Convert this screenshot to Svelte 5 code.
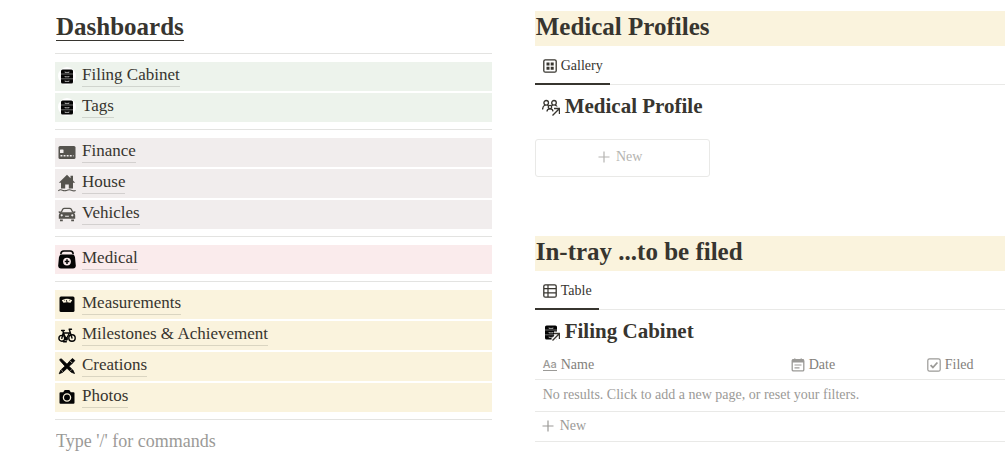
<script>
    const groups = [
        {
            color: 'green',
            items: [
                { name: 'Filing Cabinet', icon: 'cabinet' },
                { name: 'Tags', icon: 'cabinet' }
            ]
        },
        {
            color: 'brown',
            items: [
                { name: 'Finance', icon: 'card' },
                { name: 'House', icon: 'house' },
                { name: 'Vehicles', icon: 'car' }
            ]
        },
        {
            color: 'pink',
            items: [{ name: 'Medical', icon: 'medical' }]
        },
        {
            color: 'yellow',
            items: [
                { name: 'Measurements', icon: 'scale' },
                { name: 'Milestones & Achievement', icon: 'bike' },
                { name: 'Creations', icon: 'tools' },
                { name: 'Photos', icon: 'camera' }
            ]
        }
    ];

    let command = $state('');
</script>

{#snippet cabinet()}
    <rect x="3" y="2.5" width="12" height="14" rx="1.6" fill="#050505" />
    <path d="M3 7h12M3 11.8h12" stroke="#999" stroke-width=".7" />
    <path d="M7 4.6v.8h4v-.8M7 9v.8h4V9M7 13.6v.8h4v-.8" fill="none" stroke="#ccc" stroke-width=".8" />
{/snippet}

{#snippet plus()}
    <svg class="plus" viewBox="0 0 12 12" aria-hidden="true">
        <path d="M6 .5v11M.5 6h11" fill="none" stroke="currentColor" stroke-width="1.2" />
    </svg>
{/snippet}

{#snippet arrow()}
    <path d="M10.5 17.5l7-7M12 10.5h5.500v5.500" fill="none" stroke="#fff" stroke-width="4" />
    <path d="M10.5 17.5l7-7M12 10.5h5.500v5.500" fill="none" stroke="#37352f" stroke-width="1.4" />
{/snippet}

{#snippet pageIcon(icon)}
    <svg class="page-icon" viewBox="0 0 18 18" aria-hidden="true">
        {#if icon === 'cabinet'}
            <circle cx="9" cy="9" r="9" fill="#fff" />
            {@render cabinet()}
        {:else if icon === 'card'}
            <rect x=".5" y="3" width="17" height="13" rx="1.5" fill="#55534e" />
            <rect x="2" y="6.5" width="3.5" height="3.5" rx=".6" fill="#f1eded" />
            <path d="M2.5 12.8h13" stroke="#f1eded" stroke-width="1.5" stroke-dasharray="1.9 1.2" />
        {:else if icon === 'house'}
            <path d="M9 .8L.8 8.8h2.200v5.700h4.200v-4h3.600v4H15V8.800h2.200L15 6.600V1.800h-2.500v2.400z" fill="#55534e" />
            <path d="M.3 16.8q2-1.7 4.2-.5 2.2 1 4.5 0 2.2-1.2 4.5 0 2.2 1 4.200.3" fill="none" stroke="#55534e" stroke-width="1.1" />
        {:else if icon === 'car'}
            <path d="M3.2 7.5l1.5-3.200Q5.200 3.300 6.500 3.300h5q1.300 0 1.800 1l1.500 3.200" fill="none" stroke="#55534e" stroke-width="1.3" />
            <path d="M.5 6.5l2-.2.4 1h12.200l.4-1 2 .2-.3 1.300-1 .4q1 1 1 2.300v3.300H.8v-3.300q0-1.300 1-2.300l-1-.4z" fill="#55534e" />
            <path d="M2 14.5h2.800v1.700H2zM13.200 14.500H16v1.700h-2.800z" fill="#55534e" />
            <circle cx="3.7" cy="10.3" r="1.1" fill="#f1eded" />
            <circle cx="14.3" cy="10.3" r="1.1" fill="#f1eded" />
            <path d="M6.8 10.8h4.400l-.5 1H7.300z" fill="#f1eded" />
        {:else if icon === 'medical'}
            <path d="M2.800 4.300Q2.800 1 5.800 1h6.400q3 0 3 3.300" fill="none" stroke="#050505" stroke-width="1.5" />
            <path d="M4 4.600h10q2.500 0 3 2.400l.8 8.500q0 3-2.800 3H3q-2.800 0-2.800-3L1 7q.5-2.400 3-2.400z" fill="#050505" />
            <circle cx="9" cy="11.6" r="3.9" fill="#faebec" />
            <path d="M9 9.300v4.600M6.700 11.600h4.600" stroke="#050505" stroke-width="1.5" />
        {:else if icon === 'scale'}
            <rect x="1.5" y="1.500" width="15" height="15.500" rx="1.500" fill="#050505" />
            <path d="M3.800 5.200Q9 2.500 14.200 5.200l-1.700 2.500q-3.500-1-7 0z" fill="#faf3dd" />
            <path d="M9 7.500L8.300 5M6 4.500l.5 1M12 4.500l-.5 1" stroke="#050505" stroke-width=".8" />
        {:else if icon === 'bike'}
            <g fill="none" stroke="#050505" stroke-width="1.400" stroke-linecap="round" stroke-linejoin="round">
                <circle cx="3.8" cy="12.300" r="2.900" />
                <circle cx="14" cy="12" r="3.200" />
                <path d="M5.200 6.800l6.300.2M5.200 6.800L8 12.500M11.500 7L8.500 12.500M11.200 3.200l2.800 8.800M11.200 3.200h2.300M3.600 4.500h2.700M4.800 4.500l.6 2.300M5.200 6.800L3.800 12.300" />
                <path d="M5.500 15.800h2.800" />
            </g>
            <circle cx="8.3" cy="13" r="1.700" fill="#050505" />
        {:else if icon === 'tools'}
            <path d="M2 3.500Q1 1.500 3.500 2L9 7.200 12.500 3.200 14.500 1.500 16.800 3.500 15 5.700 11 9.300l4 4 1.500 3.200-3.300-1.300L9 11.300 4.800 15.200 1.200 16.800 2.800 13 7 9.200z" fill="#050505" stroke="#050505" stroke-width=".8" stroke-linejoin="round" />
            <path d="M12 3.800l2.200 2.200M3.300 13l1.700 1.700M12.500 13.800l1.400-1.400" stroke="#faf3dd" stroke-width=".7" />
        {:else}
            <path d="M2.500 4.300h2.700l1.500-2.200h4.600l1.500 2.200h2.700q1 0 1 1v9.500q0 1-1 1h-13q-1 0-1-1V5.300q0-1 1-1z" fill="#050505" />
            <circle cx="9" cy="9.500" r="3.600" fill="none" stroke="#faf3dd" stroke-width="1.300" />
        {/if}
    </svg>
{/snippet}

<main class="page">
    <nav class="dashboards">
        <h1><a href="#dashboards">Dashboards</a></h1>
        {#each groups as group}
            <hr />
            <ul class={group.color}>
                {#each group.items as item}
                    <li>
                        {@render pageIcon(item.icon)}
                        <a href="#{item.icon}">{item.name}</a>
                    </li>
                {/each}
            </ul>
        {/each}
        <hr />
        <input class="command" type="text" aria-label="Command" placeholder="Type '/' for commands" bind:value={command} />
    </nav>

    <div class="databases">
        <section class="profiles">
            <h2>Medical Profiles</h2>
            <div class="tabs">
                <button class="tab">
                    <svg viewBox="0 0 14 14" aria-hidden="true">
                        <rect x=".8" y=".8" width="12.4" height="12.4" rx="1.5" fill="none" stroke="currentColor" stroke-width="1.3" />
                        <path d="M3.500 3.500h3v3h-3zM7.700 3.500h3v3h-3zM3.500 7.700h3v3h-3zM7.700 7.700h3v3h-3z" fill="currentColor" />
                    </svg>
                    Gallery
                </button>
            </div>
            <h3>
                <svg viewBox="0 0 18 18" aria-hidden="true">
                    <g fill="none" stroke="#37352f" stroke-width="1.3">
                        <circle cx="4.2" cy="4.800" r="2.300" />
                        <circle cx="12" cy="4.800" r="2.300" />
                        <circle cx="8" cy="9" r="1.700" />
                        <path d="M.6 11.500q0-3.700 2.600-4.500M5.300 7l1.300.8M10.800 7L9.500 7.800M15.600 11q-.3-3.300-2.600-4M5 13.500q0-2.700 3-2.700 3 0 3 2.700" />
                    </g>
                    {@render arrow()}
                </svg>
                Medical Profile
            </h3>
            <button class="new-card">{@render plus()}New</button>
        </section>

        <section>
            <h2>In-tray ...to be filed</h2>
            <div class="tabs">
                <button class="tab">
                    <svg viewBox="0 0 14 14" aria-hidden="true">
                        <rect x=".8" y=".8" width="12.4" height="12.4" rx="1.5" fill="none" stroke="currentColor" stroke-width="1.3" />
                        <path d="M1 4.700h12M1 8.900h12M5 1v12" stroke="currentColor" stroke-width="1.2" />
                    </svg>
                    Table
                </button>
            </div>
            <h3>
                <svg viewBox="0 0 18 18" aria-hidden="true">
                    {@render cabinet()}
                    {@render arrow()}
                </svg>
                Filing Cabinet
            </h3>
            <table>
                <thead>
                    <tr>
                        <th class="name">
                            <span class="property"><span class="aa">Aa</span>Name</span>
                        </th>
                        <th class="date">
                            <span class="property">
                                <svg viewBox="0 0 14 14" aria-hidden="true">
                                    <rect x="1.200" y="1.700" width="11.600" height="11.200" rx="1.200" fill="none" stroke="currentColor" stroke-width="1.3" />
                                    <path d="M1 1.500h12v3H1zM3 .5h1.500v2H3zM9.500.5H11v2H9.500z" fill="currentColor" />
                                    <path d="M3.500 7h7M3.500 9.800h5" stroke="currentColor" stroke-width="1.2" />
                                </svg>
                                Date
                            </span>
                        </th>
                        <th>
                            <span class="property">
                                <svg viewBox="0 0 14 14" aria-hidden="true">
                                    <rect x=".8" y=".8" width="12.4" height="12.4" rx="1.8" fill="none" stroke="currentColor" stroke-width="1.2" />
                                    <path d="M3.600 7.200l2.300 2.300 4.500-5" fill="none" stroke="currentColor" stroke-width="1.8" />
                                </svg>
                                Filed
                            </span>
                        </th>
                    </tr>
                </thead>
                <tbody>
                    <tr>
                        <td colspan="3">No results. Click to add a new page, or reset your filters.</td>
                    </tr>
                </tbody>
            </table>
            <button class="new-row">{@render plus()}New</button>
        </section>
    </div>
</main>

<style>
    :global(body) {
        background: #fff;
    }

    .page {
        display: grid;
        grid-template-columns: minmax(0, 13fr) minmax(0, 14fr);
        column-gap: 43px;
        padding: 11px 0 16px 55px;
        color: #37352f;
        font-family: "Liberation Serif", "Times New Roman", serif;
        font-size: 17px;
    }

    h1, h2, h3, ul {
        margin: 0;
        padding: 0;
    }

    button, input {
        font-family: inherit;
        background: none;
        border: 0;
    }

    button {
        cursor: pointer;
    }

    a {
        color: inherit;
        text-decoration: none;
    }

    svg {
        display: block;
        flex: none;
    }

    /* Dashboards */
    h1 {
        display: flex;
        padding-top: 2px;
        padding-left: 1px;
        font-size: 25px;
        line-height: 27px;
    }

    h1 a {
        border-bottom: 1px solid #37352f;
    }

    hr {
        height: 1px;
        margin: 7px 0 8px;
        border: 0;
        background: #e3e3e1;
    }

    h1 + hr {
        margin-top: 12px;
    }

    ul {
        display: flex;
        flex-direction: column;
        gap: 2px;
        list-style: none;
    }

    li {
        display: flex;
        align-items: center;
        gap: 6px;
        height: 29px;
        padding-left: 3px;
    }

    li a {
        margin-bottom: 3px;
        line-height: 23px;
        border-bottom: 1px solid rgba(55, 53, 47, 0.16);
    }

    .page-icon {
        width: 18px;
        height: 18px;
        margin-bottom: 2px;
        overflow: visible;
    }

    .green li {
        background: #edf3ec;
    }

    .brown li {
        background: #f1eded;
    }

    .pink li {
        background: #faebec;
    }

    .yellow li,
    h2 {
        background: #faf3dd;
    }

    .command {
        width: 100%;
        box-sizing: border-box;
        height: 27px;
        padding: 0 1px;
        color: inherit;
        font-size: 18px;
        outline: none;
    }

    .command::placeholder {
        color: #9b9a97;
        opacity: 1;
    }

    /* Databases */
    h2 {
        padding-left: 1px;
        padding-bottom: 4px;
        font-size: 25px;
        line-height: 31px;
    }

    .profiles {
        min-height: 225px;
    }

    .tabs {
        display: flex;
        height: 38px;
        border-bottom: 1px solid #e9e9e7;
    }

    .tab {
        display: flex;
        align-items: center;
        gap: 4px;
        box-sizing: border-box;
        height: 39px;
        padding: 2px 7px 0 8px;
        color: #37352f;
        font-size: 14px;
        border-bottom: 2px solid #37352f;
    }

    .tab svg,
    .property svg {
        width: 14px;
        height: 14px;
    }

    h3 {
        display: flex;
        align-items: center;
        gap: 5px;
        height: 42px;
        padding-left: 7px;
        font-size: 21px;
    }

    h3 svg {
        width: 18px;
        height: 18px;
        padding-top: 2px;
    }

    .plus {
        width: 12px;
        height: 12px;
    }

    .new-card {
        display: flex;
        align-items: center;
        justify-content: center;
        gap: 6px;
        width: 175px;
        height: 38px;
        margin-top: 12px;
        padding: 0 6px 2px 2px;
        color: #b5b4b1;
        font-size: 14px;
        border: 1px solid #e9e9e7;
        border-radius: 3px;
    }

    table {
        width: 100%;
        table-layout: fixed;
        border-collapse: collapse;
        color: #9b9a97;
        font-size: 14px;
    }

    th {
        height: 25px;
        padding: 0 8px 2px;
        color: #82807b;
        font-weight: normal;
        border-bottom: 1px solid #e9e9e7;
    }

    .name {
        width: 232px;
    }

    .date {
        width: 120px;
    }

    .property {
        display: flex;
        align-items: center;
        gap: 4px;
    }

    .property svg {
        color: #9b9a97;
    }

    .aa {
        color: #9b9a97;
        font-family: Inter, sans-serif;
        font-size: 11px;
        font-weight: 500;
        line-height: 11px;
        border-bottom: 1px solid #9b9a97;
    }

    td {
        height: 29px;
        padding: 0 8px 2px;
        border-bottom: 1px solid #e9e9e7;
    }

    .new-row {
        display: flex;
        align-items: center;
        gap: 6px;
        box-sizing: border-box;
        width: 100%;
        height: 30px;
        padding: 0 7px 2px;
        color: #9b9a97;
        font-size: 14px;
        border-bottom: 1px solid #e9e9e7;
    }
</style>
